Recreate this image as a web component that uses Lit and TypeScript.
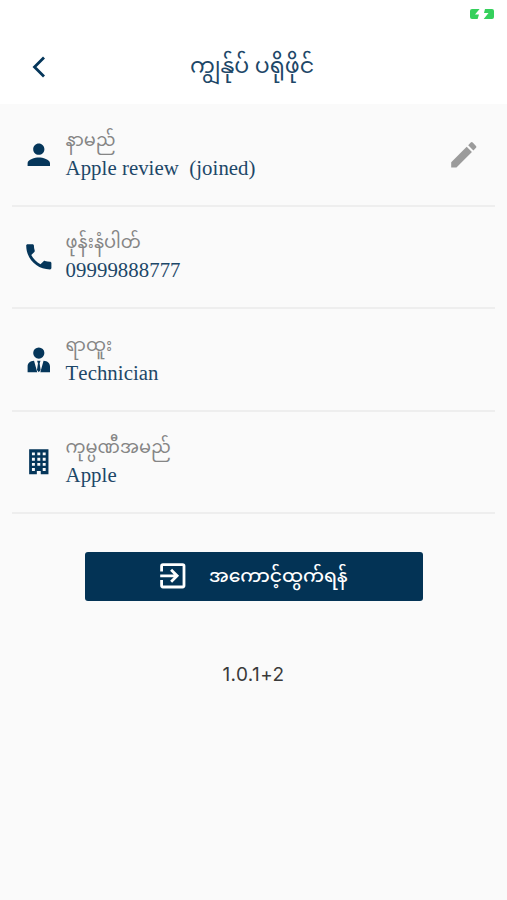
import { LitElement, html, css, svg } from "lit";
import { customElement } from "lit/decorators.js";

const person = svg`<path d="M12 12c2.21 0 4-1.79 4-4s-1.79-4-4-4-4 1.79-4 4 1.79 4 4 4zm0 2c-2.67 0-8 1.34-8 4v2h16v-2c0-2.66-5.33-4-8-4z"/>`;
const phone = svg`<path d="M6.62 10.79c1.44 2.83 3.76 5.14 6.59 6.59l2.2-2.2c.27-.27.67-.36 1.02-.24 1.12.37 2.33.57 3.57.57.55 0 1 .45 1 1V20c0 .55-.45 1-1 1-9.39 0-17-7.61-17-17 0-.55.45-1 1-1h3.5c.55 0 1 .45 1 1 0 1.25.2 2.45.57 3.57.11.35.03.74-.25 1.02l-2.2 2.2z"/>`;
const tie = svg`<circle cx="12" cy="7.2" r="4"/><path d="M8.6 12.7 10.9 20.9H4v-4.1c0-2.4 1.7-4 4.6-4.1zM15.4 12.7c2.9.1 4.6 1.7 4.6 4.1v4.1h-6.9zM10.8 12.6h2.4l-.6 2 .7 4.7-1.3 1.6-1.3-1.6.7-4.7z"/>`;
const building = svg`<path fill-rule="evenodd" d="M5.1 3h13.8v17.9h-5.5v-2.4h-2.8v2.4H5.1zM7.1 5.3v2.1h2.1V5.3zm3.85 0v2.1h2.1V5.3zm3.85 0v2.1h2.1V5.3zM7.1 9.1v2.1h2.1V9.1zm3.85 0v2.1h2.1V9.1zm3.85 0v2.1h2.1V9.1zM7.1 12.8v2.1h2.1v-2.1zm3.85 0v2.1h2.1v-2.1zm3.85 0v2.1h2.1v-2.1zM7.1 16.5v2.1h2.1v-2.1zm7.7 0v2.1h2.1v-2.1z"/>`;

const rows = [
  { icon: person, label: "နာမည်", value: "Apple review  (joined)", editable: true },
  { icon: phone, label: "ဖုန်းနံပါတ်", value: "09999888777", editable: false },
  { icon: tie, label: "ရာထူး", value: "Technician", editable: false },
  { icon: building, label: "ကုမ္ပဏီအမည်", value: "Apple", editable: false },
];

@customElement("app-root")
export class AppRoot extends LitElement {
  static styles = css`
    :host { display: block; height: 900px; background: #fafafa; color: #05365a; font-family: "Liberation Serif", "Noto Sans Myanmar", serif; overflow: hidden; }
    svg { display: block; flex: none; }
    header { height: 104px; box-sizing: border-box; background: #fff; }
    .status { height: 29px; display: flex; justify-content: flex-end; padding: 8px 12px 0 0; box-sizing: border-box; }
    .bar { height: 75px; display: grid; grid-template-columns: 78px 1fr 81px; align-items: center; }
    .back { margin-left: 22px; }
    .bar h1 { margin: 0 0 2px; font-size: 22.1px; line-height: 40px; font-weight: 400; text-align: center; white-space: nowrap; color: #1d4768; }
    main { padding-top: .5px; }
    .row { height: 102.4px; box-sizing: border-box; margin: 0 12px; padding: 0 14px 0 10px; display: flex; align-items: center; border-bottom: 2px solid #eeeeee; }
    .text { flex: 1; margin: 0 0 1.4px 10px; }
    .label { color: #858585; font-size: 17.8px; line-height: 28px; height: 28px; white-space: nowrap; }
    .value { color: #1d4768; font-size: 20.8px; line-height: 28px; letter-spacing: .05px; font-kerning: none; white-space: pre; }
    .logout { width: 338px; height: 49px; margin: 37.5px auto 0 85px; border: 0; border-radius: 3px; background: #033355; color: #fff; display: flex; align-items: center; justify-content: center; gap: 19px; padding: 0 4px 0 0; font: 500 18.8px/30px "Noto Sans Myanmar", sans-serif; }
    .logout span { padding-top: 3px; }
    .version { margin-top: 60px; text-align: center; color: #3a3a3a; font: 19px/28px Inter, sans-serif; letter-spacing: .4px; }
  `;

  render() {
    return html`
      <header>
        <div class="status">
          <svg width="26" height="12" viewBox="0 0 26 12" fill="#35d05c"><path d="M3 1h7.6L6 6.6h4L8.6 11H3Q1 11 1 9V3Q1 1 3 1zM16 1h7q2 0 2 2v6q0 2-2 2h-8.3L19.5 5H15z"/></svg>
        </div>
        <div class="bar">
          <svg class="back" width="32" height="32" viewBox="0 0 32 32" fill="none" stroke="#05365a" stroke-width="2.8"><path d="M22 6.5 12.5 16 22 25.5"/></svg>
          <h1>ကျွန်ုပ် ပရိုဖိုင်</h1>
        </div>
      </header>
      <main>
        ${rows.map((r) => html`
          <section class="row">
            <svg width="33.6" height="33.6" viewBox="0 0 24 24" fill="#05365a">${r.icon}</svg>
            <div class="text"><div class="label">${r.label}</div><div class="value">${r.value}</div></div>
            ${r.editable ? html`<svg width="33.6" height="33.6" viewBox="0 0 24 24" fill="#9b9b9b"><path d="M3 17.25V21h3.75L17.81 9.94l-3.75-3.75L3 17.25zM20.71 7.04a1 1 0 0 0 0-1.41l-2.34-2.34a1 1 0 0 0-1.41 0l-1.83 1.83 3.75 3.75 1.83-1.83z"/></svg>` : ""}
          </section>`)}
        <button class="logout">
          <svg width="33.6" height="33.6" viewBox="0 0 24 24" fill="#fff"><path d="M10.09 15.59 11.5 17l5-5-5-5-1.41 1.41L12.67 11H3v2h9.67l-2.58 2.59zM19 3H5a2 2 0 0 0-2 2v4h2V5h14v14H5v-4H3v4a2 2 0 0 0 2 2h14a2 2 0 0 0 2-2V5a2 2 0 0 0-2-2z"/></svg>
          <span>အကောင့်ထွက်ရန်</span>
        </button>
        <div class="version">1.0.1+2</div>
      </main>`;
  }
}
